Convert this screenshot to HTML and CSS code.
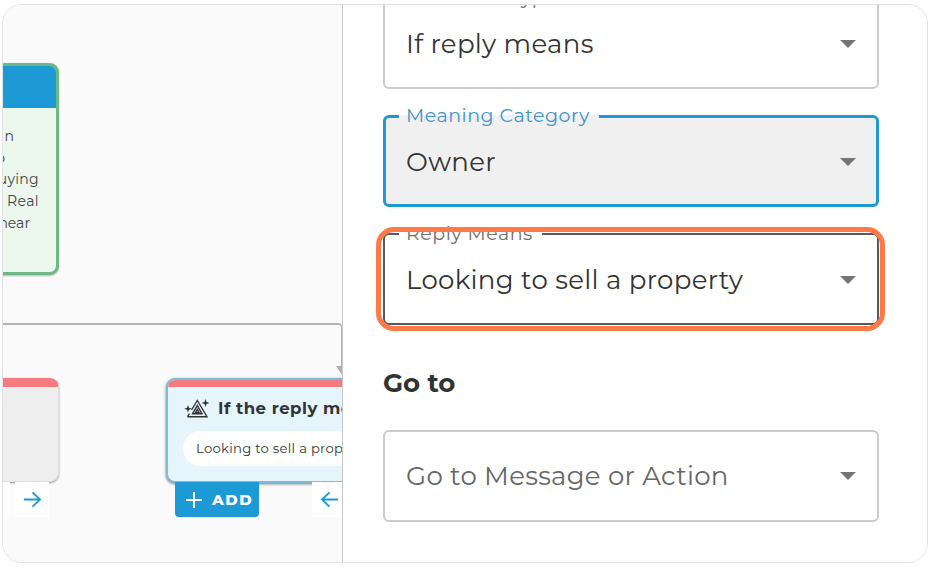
FILE: index.html
```html
<!DOCTYPE html>
<html lang="en">
<head>
<meta charset="utf-8">
<title>Flow builder</title>
<link rel="stylesheet" href="styles.css">
</head>
<body>
<main class="frame">
  <section class="canvas">
    <div class="connector"></div>
    <svg class="arrowhead" viewBox="0 0 12 9"><path d="M0 0H12L6 9Z" fill="#b0b0b4"/></svg>
    <article class="node message">
      <div class="message-head"></div>
      <div class="message-body"><span class="t1">n</span><span class="t2">o</span><span class="t3">uying</span><span class="t4">Real</span><span class="t5">near</span></div>
    </article>
    <article class="node muted"></article>
    <div class="move move-a"></div>
    <div class="move move-b"><svg viewBox="0 0 20 18"><path d="M1 9H18M10 1.5L18 9L10 16.5"/></svg></div>
    <article class="node reply">
      <header class="reply-head">
        <svg class="reply-icon" viewBox="0 0 26 20"><path d="M3.5 18.7H23L13.3 2.5L7.5 12M3.5 18.7L5.5 15.5M8.5 15.8L13.3 7.5L18 15.8ZM11.5 14.6L13.3 11.5L15 14.6Z"/><path class="spark" d="M21.5 1L22.5 4L25.5 5L22.5 6L21.5 9L20.5 6L17.5 5L20.5 4ZM4 7L5 9.7L7.8 10.7L5 11.7L4 14.5L3 11.7L.3 10.7L3 9.7Z"/></svg>
        <h2>If the reply means</h2>
      </header>
      <div class="chip">Looking to sell a property</div>
    </article>
    <button class="add"><svg viewBox="0 0 16 16"><path d="M8 0V16M0 8H16"/></svg><span>ADD</span></button>
    <div class="move move-c"><svg viewBox="0 0 20 18"><path d="M19 9H2M10 1.5L2 9L10 16.5"/></svg></div>
  </section>
  <aside class="panel">
    <fieldset class="field first"><legend><span class="l1">Condition Type</span></legend><div class="value"><span class="v1">If reply means</span><i class="caret"></i></div></fieldset>
    <fieldset class="field focused"><legend><span class="l2">Meaning Category</span></legend><div class="value"><span class="v2">Owner</span><i class="caret"></i></div></fieldset>
    <div class="target">
      <fieldset class="field dark"><legend><span class="l3">Reply Means</span></legend><div class="value"><span class="v3">Looking to sell a property</span><i class="caret"></i></div></fieldset>
      <div class="highlight"></div>
    </div>
    <h3>Go to</h3>
    <fieldset class="field"><div class="value placeholder"><span class="v4">Go to Message or Action</span><i class="caret"></i></div></fieldset>
  </aside>
</main>
</body>
</html>
```
FILE: styles.css
```css
* { box-sizing: border-box; }
body { margin: 0; padding: 4px 0 0 2px; background: #fff; font-family: Montserrat, Inter, sans-serif; color: #333; overflow: hidden; }
.frame { width: 926px; height: 559px; border: 1px solid #e2e2e5; border-radius: 20px; overflow: hidden; display: flex; background: #fff; }
svg { fill: none; stroke: #1d9ad6; stroke-width: 2; flex: none; }

.canvas { position: relative; width: 339px; flex: none; background: #fafafa; overflow: hidden; }
.connector { position: absolute; left: -20px; top: 318px; width: 359px; height: 50px; border: 2px solid #b1b1b5; border-width: 2px 1px 0 0; border-radius: 0 4px 0 0; }
.arrowhead { position: absolute; left: 333px; top: 361px; width: 12px; height: 9px; stroke: none; }
.node { position: absolute; overflow: hidden; }
.message { left: -150px; top: 58px; width: 206px; height: 212px; border: 3px solid #6db784; border-radius: 9px; background: #ecf8ed; box-shadow: 0 1px 2px #0004; }
.message-head { height: 42px; background: #1d9ad6; }
.message-body { padding: 18px 17px 0 0; font-size: 14px; line-height: 21.7px; display: flex; flex-direction: column; align-items: flex-end; color: #3f444a; }
.t1 { margin-right: 25px; }
.t2 { margin-right: 34px; }
.t3 { letter-spacing: .3px; }
.t4 { letter-spacing: .4px; }
.t5 { margin-right: 9px; }
.muted { left: -150px; top: 373px; width: 206px; height: 104px; border: 1px solid #e0dede; border-top: 9px solid #f67b81; border-radius: 9px; background: #eee; box-shadow: 0 1px 2px #0006; }
.reply { left: 163px; top: 373px; width: 206px; height: 105px; border: 2px solid #7fbbd9; border-radius: 9px; background: #e6f5fb; box-shadow: 0 1px 3px #0008; }
.reply-head { display: flex; align-items: center; gap: 8px; height: 51px; padding: 0 0 2px 16px; border-top: 7px solid #f67b81; }
.reply-icon { width: 26px; height: 20px; stroke: #333; stroke-width: 1.4; }
.spark { fill: #333; stroke: none; }
.reply h2 { margin: 0; font-size: 16.5px; font-weight: 700; letter-spacing: .5px; white-space: nowrap; }
.chip { height: 35px; margin-left: 15px; padding-left: 13px; border-radius: 18px; background: #fff; font-size: 13.2px; line-height: 35px; letter-spacing: .27px; white-space: nowrap; color: #333; }
.move { position: absolute; top: 477px; width: 34px; height: 35px; background: #fff; display: flex; align-items: center; justify-content: center; }
.move svg { width: 19px; height: 17px; }
.move-a { left: -27px; }
.move-b { left: 12px; }
.move-c { left: 309px; }
.add { position: absolute; left: 172px; top: 477px; width: 84px; height: 35px; border: 0; border-radius: 0 0 4px 4px; padding: 0 0 0 11px; background: #1d9ad6; color: #fff; display: flex; align-items: center; gap: 10px; font: 800 15px Montserrat, Inter, sans-serif; letter-spacing: 1.5px; }
.add svg { width: 16px; height: 16px; stroke: #fff; }

.panel { width: 585px; flex: none; padding: 0 48px 0 40px; border-left: 1px solid #c8c8cb; background: #fff; }
.field { display: block; margin: 0 0 26px; padding: 0; min-width: 0; width: 496px; height: 92px; border: 2px solid #cbcbcb; border-radius: 6px; }
.first { margin-top: -8px; }
.field legend { height: 2px; margin-left: 14px; padding: 0 9px 0 7px; font-size: 19px; line-height: 2px; letter-spacing: .53px; color: #707070; white-space: nowrap; }
.field legend span { position: relative; top: 0; }
.focused { border: 3px solid #1d9ad6; background: #f0f0f0; }
.focused legend { height: 3px; margin-left: 13px; line-height: 3px; color: #3f93cf; }
.focused legend span { top: -1px; }
.dark { border-color: #5a5a5a; }
.value { height: 90px; padding: 0 21px; display: flex; align-items: center; justify-content: space-between; font-size: 26px; letter-spacing: .32px; color: #333; }
.focused .value { height: 88px; padding: 0 20px; }
.placeholder { height: 88px; color: #666; letter-spacing: .28px; }
.caret { width: 0; height: 0; border: 8px solid transparent; border-top-color: #757575; border-bottom: 0; }
.target { position: relative; }
.highlight { position: absolute; left: -7px; top: -6px; width: 509px; height: 104px; border: 5px solid #ff7a48; border-radius: 18px; }
.panel h3 { margin: 42px 0 31px; font-size: 26px; line-height: 32px; font-weight: 700; }
```
